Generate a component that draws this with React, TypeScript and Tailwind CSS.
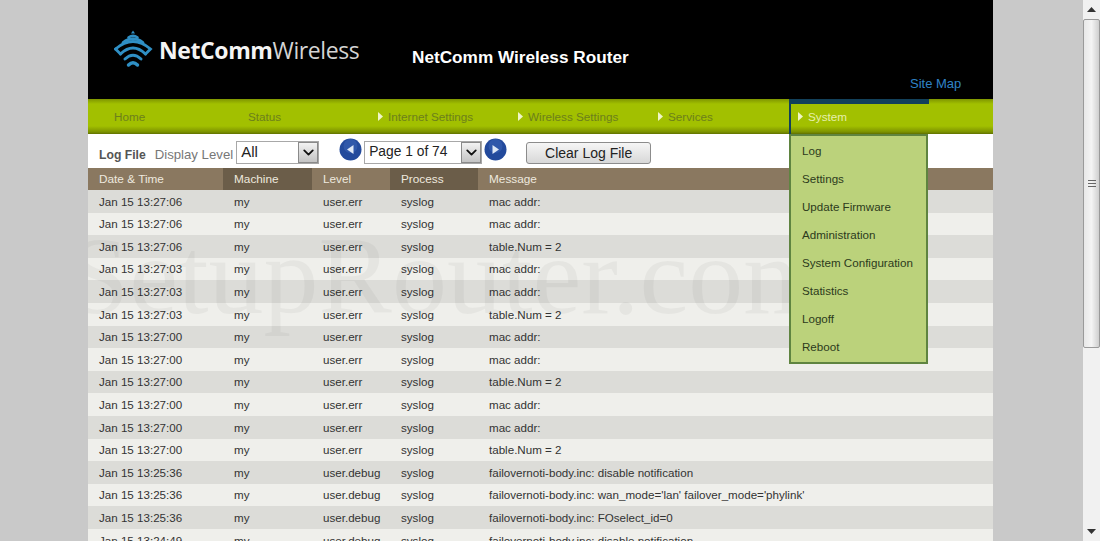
import { ChevronDown } from 'lucide-react';

const navItems = [
  { label: 'Internet Settings', width: 'w-[140px]' },
  { label: 'Wireless Settings', width: 'w-[140px]' },
  { label: 'Services', width: 'w-[131px]' },
];

const systemMenu = ['Log', 'Settings', 'Update Firmware', 'Administration', 'System Configuration', 'Statistics', 'Logoff', 'Reboot'];

const rows = [
  ['Jan 15 13:27:06', 'user.err', 'mac addr:'],
  ['Jan 15 13:27:06', 'user.err', 'mac addr:'],
  ['Jan 15 13:27:06', 'user.err', 'table.Num = 2'],
  ['Jan 15 13:27:03', 'user.err', 'mac addr:'],
  ['Jan 15 13:27:03', 'user.err', 'mac addr:'],
  ['Jan 15 13:27:03', 'user.err', 'table.Num = 2'],
  ['Jan 15 13:27:00', 'user.err', 'mac addr:'],
  ['Jan 15 13:27:00', 'user.err', 'mac addr:'],
  ['Jan 15 13:27:00', 'user.err', 'table.Num = 2'],
  ['Jan 15 13:27:00', 'user.err', 'mac addr:'],
  ['Jan 15 13:27:00', 'user.err', 'mac addr:'],
  ['Jan 15 13:27:00', 'user.err', 'table.Num = 2'],
  ['Jan 15 13:25:36', 'user.debug', 'failovernoti-body.inc: disable notification'],
  ['Jan 15 13:25:36', 'user.debug', "failovernoti-body.inc: wan_mode='lan' failover_mode='phylink'"],
  ['Jan 15 13:25:36', 'user.debug', 'failovernoti-body.inc: FOselect_id=0'],
  ['Jan 15 13:24:49', 'user.debug', 'failovernoti-body.inc: disable notification'],
];

function Arrow() {
  return (
    <svg width="5" height="9" viewBox="0 0 5 9" className="mr-[5px] shrink-0">
      <path d="M0 0 L5 4.5 L0 9 Z" fill="#f0f5c8" />
    </svg>
  );
}

function Logo() {
  return (
    <svg width="40" height="40" viewBox="0 0 40 40" fill="none" stroke="#2f8fc4" strokeLinecap="round" className="shrink-0">
      <path d="M20 0.5 L22 3.5 H18 Z" fill="#2f8fc4" stroke="none" />
      <path d="M15.5 7.5 Q20 4 24.5 7.5" strokeWidth="2.6" />
      <path d="M10 12.5 Q20 5 30 12.5" strokeWidth="2.8" />
      <path d="M2.5 19 Q20 4 37.5 19 L32.5 24" strokeWidth="2.8" />
      <path d="M2.5 19 L7.5 24" strokeWidth="2.8" />
      <path d="M7.5 24 Q20 12 32.5 24" strokeWidth="3" />
      <path d="M12 29 Q20 21.5 28 29" strokeWidth="3" />
      <path d="M15.5 35 Q20 30.5 24.5 35" strokeWidth="3.4" />
    </svg>
  );
}

function SelectBox({ label, className }: { label: string; className: string }) {
  return (
    <div className={`flex h-[23px] items-stretch border border-[#a8a8a8] bg-white text-[#222] ${className}`}>
      <span className="flex-1 pl-[4px] leading-[19px]">{label}</span>
      <span className="flex w-[20px] items-center justify-center border border-[#8a8a8a] bg-gradient-to-b from-[#f2f2f2] to-[#c4c4c4]">
        <ChevronDown size={17} strokeWidth={2.6} className="text-[#111]" />
      </span>
    </div>
  );
}

function RoundButton({ dir }: { dir: 'prev' | 'next' }) {
  return (
    <svg width="23" height="23" viewBox="0 0 23 23" className="shrink-0">
      <circle cx="11.5" cy="11.5" r="11" fill="#234a9c" />
      <circle cx="11.5" cy="8" r="7" fill="#3d64b6" opacity="0.55" />
      <path d={dir === 'prev' ? 'M14.5 7 L8 11.5 L14.5 16 Z' : 'M8.5 7 L15 11.5 L8.5 16 Z'} fill="#dfe8f6" />
    </svg>
  );
}

export default function App() {
  return (
    <div className="flex h-[541px] w-[1100px] overflow-hidden bg-[#c9c9c9] font-['Liberation_Sans',Arial,sans-serif]">
      <div className="w-[88px] shrink-0" />
      <main className="relative w-[905px] shrink-0 overflow-hidden bg-white">
        <header className="relative h-[99px] bg-black">
          <div className="flex items-center pl-[25px] pt-[30px]">
            <Logo />
            <span className="ml-[6px] font-['Open_Sans',sans-serif] text-[23px] font-bold leading-[38px] tracking-[-0.4px] text-[#f4f4f4]">
              NetComm<span className="font-normal text-[#d4d4d4]">Wireless</span>
            </span>
          </div>
          <div className="absolute left-[324px] top-[46px] text-[17.2px] font-bold leading-[22px] text-white">NetComm Wireless Router</div>
          <div className="absolute left-[822px] top-[75px] text-[13px] leading-[17px] text-[#2f83c6]">Site Map</div>
        </header>

        <nav className="flex h-[35px] items-center bg-[linear-gradient(to_bottom,#7f9600_0,#a2c000_5px,#a2c000_27px,#7c9200_33px,#5f7000_35px)] text-[11.7px] text-[#6c7f1c]">
          <div className="w-[160px] pl-[26px]">Home</div>
          <div className="w-[130px]">Status</div>
          {navItems.map((item) => (
            <div key={item.label} className={`flex items-center ${item.width}`}>
              <Arrow />
              {item.label}
            </div>
          ))}
          <div className="flex h-full w-[140px] items-center border-l-2 border-t-[5px] border-[#12405a] pb-[5px] pl-[7px] text-[#e6efac]">
            <Arrow />
            System
          </div>
        </nav>

        <div className="flex h-[34px] items-center pl-[11px]">
          <span className="mt-[8px] text-[12.2px] font-bold text-[#555]">Log File</span>
          <span className="ml-[9px] mt-[8px] text-[13.2px] text-[#777]">Display Level</span>
          <SelectBox label="All" className="ml-[3px] mt-[3px] w-[83px] text-[15px]" />
          <div className="ml-[20px] -mt-[3px]"><RoundButton dir="prev" /></div>
          <SelectBox label="Page 1 of 74" className="ml-[2px] mt-[3px] w-[118px] text-[13.8px]" />
          <div className="ml-[2px] -mt-[3px]"><RoundButton dir="next" /></div>
          <button className="ml-[19px] mt-[3px] h-[22px] w-[125px] rounded-[3px] border border-[#8c8c8c] bg-gradient-to-b from-[#f6f6f6] to-[#d8d8d8] text-[14px] leading-[20px] text-[#222]">
            Clear Log File
          </button>
        </div>

        <div className="grid h-[22px] grid-cols-[135px_89px_78px_88px_1fr] text-[11.8px] leading-[22px] text-[#eee9df]">
          <div className="bg-[#8a7860] pl-[11px]">Date &amp; Time</div>
          <div className="bg-[#6b5d49] pl-[11px]">Machine</div>
          <div className="bg-[#8a7860] pl-[11px]">Level</div>
          <div className="bg-[#6b5d49] pl-[11px]">Process</div>
          <div className="bg-[#8a7860] pl-[11px]">Message</div>
        </div>

        <div className="text-[11.6px] text-[#333]">
          {rows.map((row, i) => (
            <div
              key={i}
              className={`grid h-[22.6px] grid-cols-[135px_89px_78px_88px_1fr] items-center ${i % 2 === 0 ? 'bg-[#dcdcd8]' : 'bg-[#efefeb]'}`}
            >
              <div className="pl-[11px]">{row[0]}</div>
              <div className="pl-[11px]">my</div>
              <div className="pl-[11px]">{row[1]}</div>
              <div className="pl-[11px]">syslog</div>
              <div className="pl-[11px]">{row[2]}</div>
            </div>
          ))}
        </div>

        <div className="pointer-events-none absolute left-[-20px] top-[216px] whitespace-nowrap font-['Liberation_Serif',serif] text-[110px] leading-[120px] text-black/[0.04]">
          SetupRouter.com
        </div>

        <div className="absolute left-[701px] top-[134px] flex h-[230px] w-[139px] flex-col border-2 border-[#5f8440] bg-[#bbd27b] pl-[11px] pt-[1px] text-[11.6px] text-[#2c3a1c]">
          {systemMenu.map((item) => (
            <div key={item} className="h-[28px] leading-[28px]">{item}</div>
          ))}
        </div>
      </main>

      <div className="w-[90px] shrink-0" />
      <aside className="flex w-[17px] shrink-0 flex-col bg-[#f1f1f1]">
        <div className="flex h-[19px] items-center justify-center">
          <svg width="9" height="5" viewBox="0 0 9 5"><path d="M4.5 0 L9 5 H0 Z" fill="#333" /></svg>
        </div>
        <div className="flex h-[329px] items-center justify-center rounded-[2px] border border-[#9a9a9a] bg-gradient-to-r from-[#e8e8e8] via-[#f4f4f4] to-[#cfcfcf]">
          <svg width="8" height="7" viewBox="0 0 8 7" stroke="#666"><path d="M0 .5H8M0 3.5H8M0 6.5H8" /></svg>
        </div>
        <div className="flex-1" />
        <div className="flex h-[19px] items-center justify-center">
          <svg width="9" height="5" viewBox="0 0 9 5"><path d="M4.5 5 L9 0 H0 Z" fill="#333" /></svg>
        </div>
      </aside>
    </div>
  );
}
